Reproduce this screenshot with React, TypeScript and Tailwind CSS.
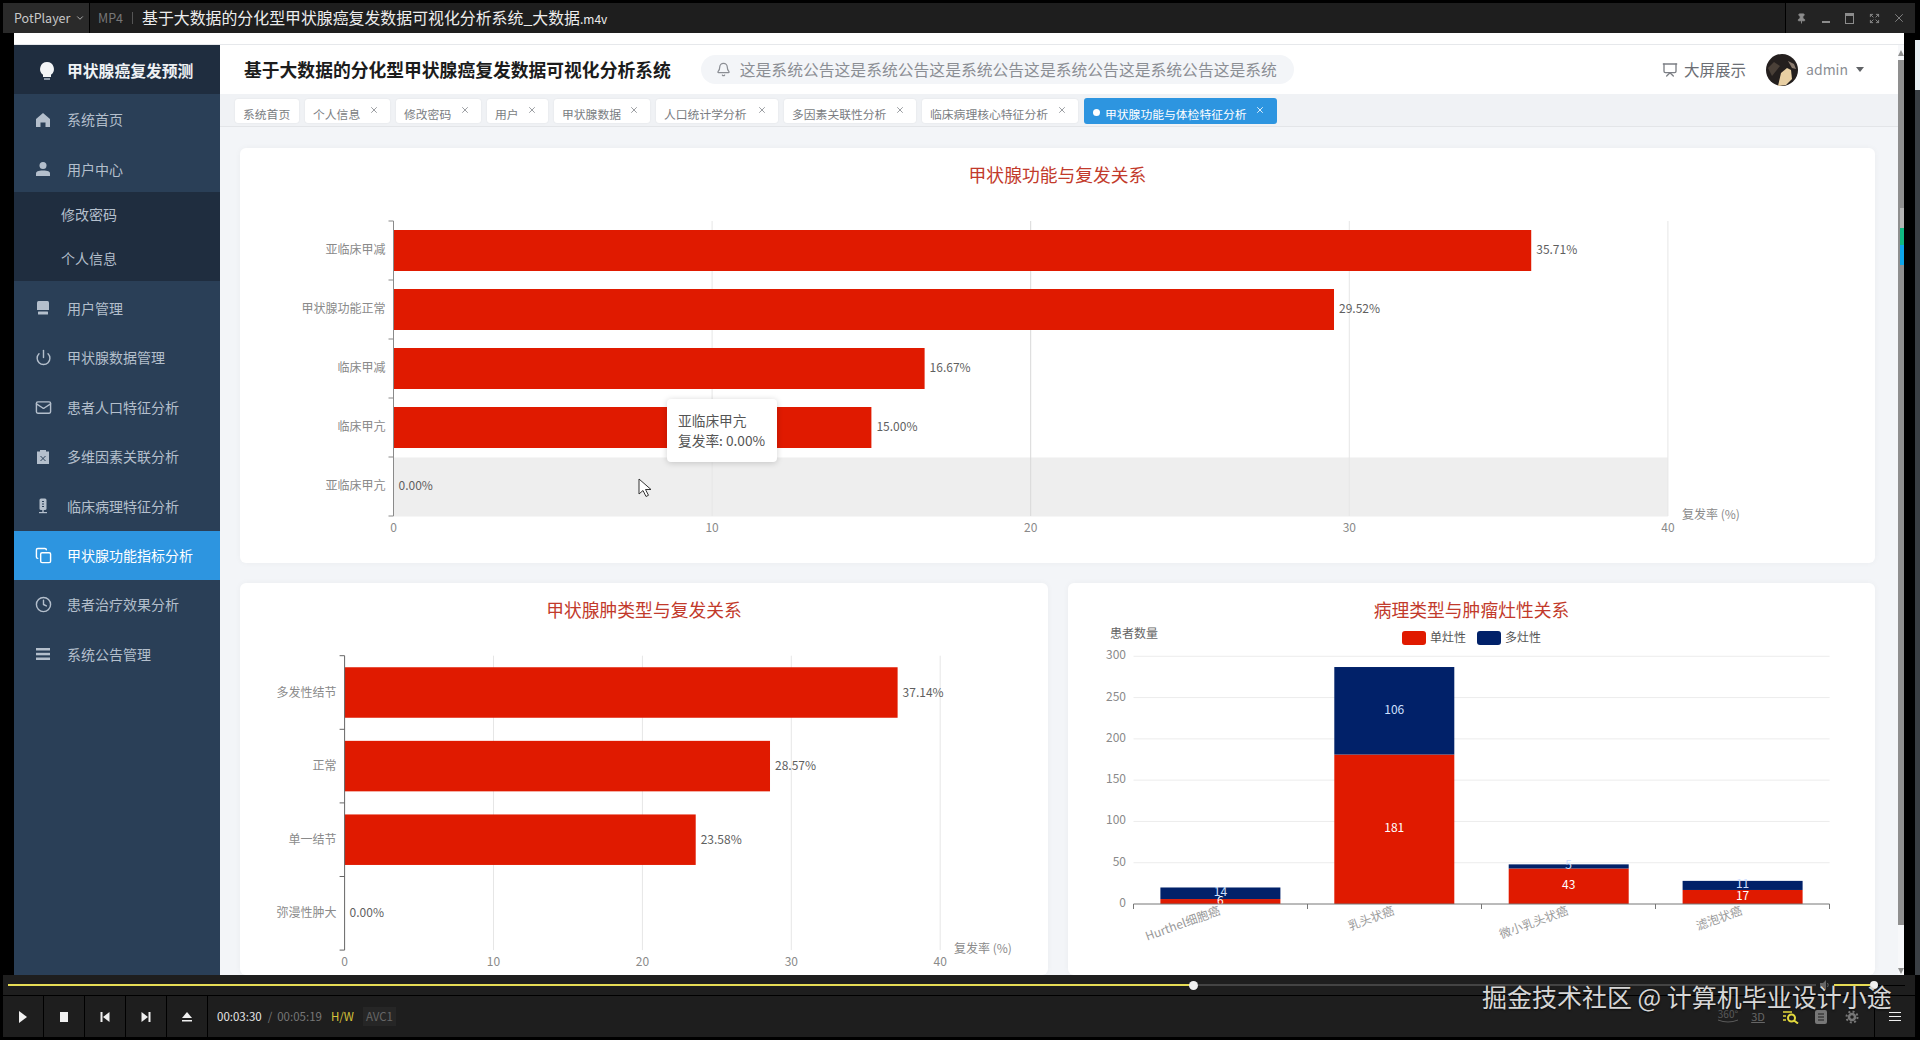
import { Bell, ChevronDown, Clock, Copy, Expand, Mail, Pin, Power, Presentation, X } from 'lucide-react';
import type { ReactNode } from 'react';

const RED = '#e01a00';
const NAVY = '#012169';

const tabs = [
  { label: '系统首页', w: 'w-[64px]', closable: false },
  { label: '个人信息', w: 'w-[85px]', closable: true },
  { label: '修改密码', w: 'w-[85px]', closable: true },
  { label: '用户', w: 'w-[61px]', closable: true },
  { label: '甲状腺数据', w: 'w-[96px]', closable: true },
  { label: '人口统计学分析', w: 'w-[122px]', closable: true },
  { label: '多因素关联性分析', w: 'w-[132px]', closable: true },
  { label: '临床病理核心特征分析', w: 'w-[156px]', closable: true },
];

const HomeIcon = () => (
  <svg width="16" height="16" viewBox="0 0 16 16" fill="currentColor"><path d="M8 1 1 7v8h4.500v-4.500h5V15H15V7z" /></svg>
);
const UserIcon = () => (
  <svg width="16" height="16" viewBox="0 0 16 16" fill="currentColor"><circle cx="8" cy="4.500" r="3.500" /><path d="M1 15v-2.500C1 10.500 3 9.500 8 9.500s7 1 7 3V15z" /></svg>
);
const PrinterIcon = () => (
  <svg width="16" height="16" viewBox="0 0 16 16" fill="currentColor"><path d="M2 2.500Q2 1 3.500 1h9Q14 1 14 2.500V10H2z" /><rect x="3" y="11.500" width="10" height="3" rx="0.500" /></svg>
);
const ClipboardIcon = () => (
  <svg width="16" height="16" viewBox="0 0 16 16"><path fill="currentColor" d="M2 2.500h3V1h6v1.500h3V15H2z" /><path d="m5.500 7 5 5m0-5-5 5" stroke="#2a3f57" strokeWidth="1" /></svg>
);
const MicIcon = () => (
  <svg width="16" height="16" viewBox="0 0 16 16" fill="currentColor"><path d="M4.500 2Q4.500 0.500 6 0.500h4Q11.500 0.500 11.500 2v8.500Q11.500 12 10 12H6Q4.500 12 4.500 10.500z" /><path d="M7 3.500h2M7 6h2M7 8.500h2" stroke="#2a3f57" /><rect x="7.300" y="12" width="1.400" height="2" /><rect x="4" y="14" width="8" height="1.200" /></svg>
);
const BarsIcon = () => (
  <svg width="16" height="16" viewBox="0 0 16 16" fill="currentColor"><rect x="1" y="2" width="14" height="2.500" /><rect x="1" y="6.800" width="14" height="2.500" /><rect x="1" y="11.500" width="14" height="2.500" /></svg>
);

const menuTop: { label: string; icon: ReactNode }[] = [
  { label: '系统首页', icon: <HomeIcon /> },
  { label: '用户中心', icon: <UserIcon /> },
];

const menuRest: { label: string; icon: ReactNode; active?: boolean }[] = [
  { label: '用户管理', icon: <PrinterIcon /> },
  { label: '甲状腺数据管理', icon: <Power size={17} /> },
  { label: '患者人口特征分析', icon: <Mail size={17} /> },
  { label: '多维因素关联分析', icon: <ClipboardIcon /> },
  { label: '临床病理特征分析', icon: <MicIcon /> },
  { label: '甲状腺功能指标分析', icon: <Copy size={17} />, active: true },
  { label: '患者治疗效果分析', icon: <Clock size={17} /> },
  { label: '系统公告管理', icon: <BarsIcon /> },
];

const MenuItem = ({ label, icon, active }: { label: string; icon: ReactNode; active?: boolean }) => (
  <div className={active ? 'h-[49.4px] flex items-center bg-[#2d95e0] text-white' : 'h-[49.4px] flex items-center text-[#b4bfcc]'}>
    <span className="w-[53px] flex justify-center pl-[5px] shrink-0">{icon}</span>
    <span className="text-[14px]">{label}</span>
  </div>
);

const Sidebar = () => (
  <aside className="w-[206px] shrink-0 bg-[#2a3f57] flex flex-col">
    <div className="h-[49px] bg-[#1f2d3f] flex items-center shrink-0 pt-[3px]">
      <svg className="ml-[24px] mr-[11px]" width="18" height="20" viewBox="0 0 18 20" fill="#f2f4f6">
        <path d="M9 1a7 7 0 0 0-4 12.700V16h8v-2.300A7 7 0 0 0 9 1z" />
        <rect x="6" y="17" width="6" height="2" fill="#8b98a8" />
      </svg>
      <span className="text-[15.800px] font-bold text-[#eef1f4] whitespace-nowrap">甲状腺癌复发预测</span>
    </div>
    <div className="h-[1px]" />
    {menuTop.map((m) => <MenuItem key={m.label} {...m} />)}
    <div className="bg-[#1f2d3f] text-[#b4bfcc] text-[14px] -mt-[2px]">
      <div className="h-[44.500px] flex items-center pl-[47px]">修改密码</div>
      <div className="h-[44.500px] flex items-center pl-[47px]">个人信息</div>
    </div>
    <div className="h-[3px]" />
    {menuRest.map((m) => <MenuItem key={m.label} {...m} />)}
  </aside>
);

const Header = () => (
  <header className="h-[49px] shrink-0 bg-white flex items-center pl-[24px] pr-[34px] text-[#606266]">
    <h1 className="text-[17.800px] font-bold text-[#1c1c1c] whitespace-nowrap">基于大数据的分化型甲状腺癌复发数据可视化分析系统</h1>
    <div className="ml-[30px] w-[593px] h-[29px] rounded-full bg-[#f3f5f8] flex items-center pl-[15px] text-[#8b8e94] overflow-hidden shrink-0">
      <Bell size={15} className="mr-[9px] shrink-0" />
      <span className="text-[15.800px] whitespace-nowrap">这是系统公告这是系统公告这是系统公告这是系统公告这是系统公告这是系统</span>
    </div>
    <div className="ml-auto flex items-center">
      <Presentation size={16} className="mr-[6px] text-[#7c7f85]" />
      <span className="text-[15.500px] text-[#6b6e74]">大屏展示</span>
      <svg className="ml-[20px]" width="32" height="32" viewBox="0 0 32 32">
        <circle cx="16" cy="16" r="16" fill="#241f1e" />
        <path d="M12 32 15 19 21 14 25 16 26 25 20 31z" fill="#e8cfa3" />
        <path d="M2 14 8 8 14 12 6 22z" fill="#4a4038" />
        <path d="M22 7 28 10 30 15 26 14z" fill="#8b7c70" />
      </svg>
      <span className="ml-[8px] text-[14px] text-[#8b8e94]">admin</span>
      <span className="ml-[8px] w-0 h-0 border-x-[4px] border-x-transparent border-t-[5px] border-t-[#606266]" />
    </div>
  </header>
);

const TabsBar = () => (
  <div className="h-[33px] shrink-0 bg-[#f0f2f5] border-b border-[#e3e5e8] flex gap-[6px] pl-[15px] pt-[5px]">
    {tabs.map((t) => (
      <div key={t.label} className={`${t.w} h-[24px] rounded-[3px] bg-white flex pl-[8px] text-[#7a7d82] shadow-[0_0_2px_rgba(0,0,0,0.08)]`}>
        <span className="text-[11.800px] leading-[16px] pt-[7px] whitespace-nowrap">{t.label}</span>
        {t.closable && <X size={10} className="ml-auto mr-[11px] mt-[6px] text-[#888b90]" />}
      </div>
    ))}
    <div className="w-[193px] h-[26px] -mt-[1px] rounded-[3px] bg-[#2d95e0] flex pl-[9px] text-white">
      <span className="w-[7px] h-[7px] rounded-full bg-white mt-[11px] mr-[5px]" />
      <span className="text-[11.800px] leading-[16px] pt-[8px] whitespace-nowrap">甲状腺功能与体检特征分析</span>
      <X size={10} className="ml-auto mr-[12px] mt-[7px]" />
    </div>
  </div>
);

const Card = ({ title, className, children }: { title: string; className: string; children: ReactNode }) => (
  <section className={`relative bg-white rounded-[6px] shadow-[0_0_6px_rgba(0,0,0,0.04)] overflow-hidden ${className}`}>
    <h3 className="pt-[14px] pb-[1px] text-center text-[17.800px] leading-[24px] text-[#c23a2b]">{title}</h3>
    {children}
  </section>
);

type Row = { name: string; value: number };

type HBarProps = {
  box: [number, number, number, number];
  rows: Row[];
  x0: number;
  perTen: number;
  yTop: number;
  rowH: number;
  barH: number;
  tickY: number;
  unitX: number;
  unitY: number;
  axis: string;
  labelDy: number;
  band?: number;
};

// coordinates are those of the screenshot, the viewBox crops them to the card
const HBarChart = ({ box, rows, x0, perTen, yTop, rowH, barH, tickY, unitX, unitY, axis, labelDy, band }: HBarProps) => {
  const yBottom = yTop + rowH * rows.length;
  return (
    <svg className="block" width={box[2]} height={box[3]} viewBox={box.join(' ')} fontSize="12">
      {band !== undefined && <rect x={x0} y={yTop + rowH * band + 0.500} width={perTen * 4} height={rowH} fill="#eeeeee" />}
      {[10, 20, 30, 40].map((t) => (
        <line key={t} x1={x0 + (t * perTen) / 10} x2={x0 + (t * perTen) / 10} y1={yTop} y2={yBottom} stroke={band !== undefined && t === 20 ? '#d8d8d8' : '#e6e6e6'} />
      ))}
      {rows.map((r, i) => {
        const cy = yTop + rowH * (i + 0.500);
        const w = (r.value * perTen) / 10;
        return (
          <g key={r.name}>
            <rect x={x0} y={cy - barH / 2} width={w} height={barH} fill={RED} />
            <text x={x0 - 8} y={cy + labelDy} textAnchor="end" fill="#8a8a8a">{r.name}</text>
            <text x={x0 + w + 5} y={cy + labelDy} fill="#5f5f5f">{r.value.toFixed(2)}%</text>
          </g>
        );
      })}
      <line x1={x0} x2={x0} y1={yTop} y2={yBottom} stroke={axis} />
      {rows.map((_, i) => (
        <line key={i} x1={x0 - 5} x2={x0} y1={yTop + rowH * i} y2={yTop + rowH * i} stroke={axis} />
      ))}
      <line x1={x0 - 5} x2={x0} y1={yBottom} y2={yBottom} stroke={axis} />
      {[0, 10, 20, 30, 40].map((t) => (
        <text key={t} x={x0 + (t * perTen) / 10} y={tickY} textAnchor="middle" fill="#8a8a8a">{t}</text>
      ))}
      <text x={unitX} y={unitY} fill="#8a8a8a">复发率 (%)</text>
    </svg>
  );
};

const stack = [
  { name: 'Hurthel细胞癌', x: 1160.400, a: 6, b: 14, labelX: 1221 },
  { name: '乳头状癌', x: 1334.300, a: 181, b: 106, labelX: 1395 },
  { name: '微小乳头状癌', x: 1508.700, a: 43, b: 5, labelX: 1569 },
  { name: '滤泡状癌', x: 1682.600, a: 17, b: 11, labelX: 1743 },
];

const StackChart = () => {
  const y0 = 905;
  const k = 0.8257;
  return (
    <svg className="block" width="807" height="352" viewBox="1068 623 807 352" fontSize="12">
      <text x="1110" y="639" fill="#666666">患者数量</text>
      <rect x="1402" y="632" width="24" height="14" rx="3" fill={RED} />
      <text x="1430" y="643" fill="#555555">单灶性</text>
      <rect x="1477" y="632" width="24" height="14" rx="3" fill={NAVY} />
      <text x="1505" y="643" fill="#555555">多灶性</text>
      {[0, 50, 100, 150, 200, 250, 300].map((t) => (
        <g key={t}>
          {t > 0 && <line x1="1133.500" x2="1829.600" y1={y0 - t * k} y2={y0 - t * k} stroke="#ececec" />}
          <text x="1126" y={y0 - t * k + 3} textAnchor="end" fill="#8a8a8a">{t}</text>
        </g>
      ))}
      {stack.map((s) => {
        const ha = s.a * k;
        const hb = s.b * k;
        return (
          <g key={s.name}>
            <rect x={s.x} y={y0 - ha} width="120" height={ha} fill={RED} />
            <rect x={s.x} y={y0 - ha - hb} width="120" height={hb} fill={NAVY} />
            <text x={s.x + 60} y={y0 - ha - hb / 2 + 3} textAnchor="middle" fill="#cfe0ff">{s.b}</text>
            <text x={s.x + 60} y={y0 - ha / 2 + 3} textAnchor="middle" fill="#ffffff">{s.a}</text>
            <text x={s.labelX} y="915" textAnchor="end" fill="#9a9a9a" transform={`rotate(-20 ${s.labelX} 915)`}>{s.name}</text>
          </g>
        );
      })}
      <line x1="1133.500" x2="1829.600" y1={y0} y2={y0} stroke="#777777" />
      {[0, 1, 2, 3, 4].map((i) => (
        <line key={i} x1={1133.500 + i * 174} x2={1133.500 + i * 174} y1={y0} y2={y0 + 5} stroke="#777777" />
      ))}
    </svg>
  );
};

const Content = () => (
  <div className="flex-1 min-h-0 bg-[#f3f5f8] pl-[20px] pr-[23px] pt-[21px] flex flex-col gap-[20px] overflow-hidden">
    <Card title="甲状腺功能与复发关系" className="h-[415px] shrink-0">
      <HBarChart
        box={[240, 188, 1635, 375]}
        rows={[
          { name: '亚临床甲减', value: 35.71 },
          { name: '甲状腺功能正常', value: 29.52 },
          { name: '临床甲减', value: 16.67 },
          { name: '临床甲亢', value: 15.0 },
          { name: '亚临床甲亢', value: 0 },
        ]}
        x0={393.500}
        perTen={318.600}
        yTop={222}
        rowH={59}
        barH={41}
        tickY={533}
        unitX={1682}
        unitY={520}
        axis="#8a8a8a"
        labelDy={3}
        band={4}
      />
      <div className="absolute left-[427px] top-[251px] w-[110px] h-[63px] rounded-[4px] bg-white shadow-[0_1px_6px_rgba(0,0,0,0.18)] pl-[11px] pt-[11px] text-[13.700px] leading-[20px] text-[#555555]">
        <div>亚临床甲亢</div>
        <div className="whitespace-nowrap">复发率: 0.00%</div>
      </div>
      <svg className="absolute left-[398px] top-[330px]" width="14" height="20" viewBox="0 0 14 20">
        <path d="M1 1v15l4-3.500 3 6 2.500-1.200-3-5.800H13z" fill="#ffffff" stroke="#333333" />
      </svg>
    </Card>
    <div className="flex gap-[20px] flex-1 min-h-0">
      <Card title="甲状腺肿类型与复发关系" className="w-[808px]">
        <HBarChart
          box={[240, 623, 808, 352]}
          rows={[
            { name: '多发性结节', value: 37.14 },
            { name: '正常', value: 28.57 },
            { name: '单一结节', value: 23.58 },
            { name: '弥漫性肿大', value: 0 },
          ]}
          x0={344.600}
          perTen={148.900}
          yTop={656.700}
          rowH={73.600}
          barH={50.500}
          tickY={967}
          unitX={954}
          unitY={954}
          axis="#666666"
          labelDy={4}
        />
      </Card>
      <Card title="病理类型与肿瘤灶性关系" className="w-[807px]">
        <StackChart />
      </Card>
    </div>
  </div>
);

const ScrollBar = () => (
  <div className="w-[6px] shrink-0 bg-[#f7f8fa] flex flex-col pt-[5px] items-end">
    <div className="w-0 h-0 border-x-[3px] border-x-transparent border-b-[6px] border-b-[#8f8f8f]" />
    <div className="mt-[4px] w-full h-[865px] bg-[#8f8f8f] flex flex-col items-end pt-[148px] shrink-0">
      <div className="w-[4px] h-[20px] bg-[#b5b5b5]" />
      <div className="w-[4px] h-[17px] bg-[#10b981]" />
      <div className="w-[4px] h-[20px] bg-[#0ea5e9]" />
    </div>
    <div className="flex-1" />
    <div className="w-0 h-0 border-x-[3px] border-x-transparent border-t-[6px] border-t-[#8f8f8f] mb-[1px]" />
  </div>
);

const WindowButton = ({ children }: { children: ReactNode }) => (
  <span className="w-[24.400px] flex justify-center items-center">{children}</span>
);

const TitleBar = () => (
  <div className="h-[30px] ml-[3px] mr-[5px] bg-[#1e1e1e] flex items-center text-[#c8c8c8] shrink-0">
    <div className="w-[87px] h-full bg-[#2a2a2a] flex items-center pl-[11px] text-[12.500px] border-r border-black">
      PotPlayer
      <ChevronDown size={10} className="ml-[5px]" />
    </div>
    <span className="ml-[8px] text-[12.500px] text-[#777777]">MP4</span>
    <span className="ml-[9px] w-px h-[12px] bg-[#555555]" />
    <span className="ml-[9px] text-[15.900px] text-[#ededed] whitespace-nowrap">
      基于大数据的分化型甲状腺癌复发数据可视化分析系统_大数据<span className="text-[12px]">.m4v</span>
    </span>
    <div className="ml-auto h-full w-[130px] bg-[#232323] border-l border-black flex items-center text-[#8c8c8c] pl-[3px]">
      <WindowButton><Pin size={11} fill="currentColor" /></WindowButton>
      <WindowButton><span className="w-[8px] h-[2px] mt-[8px] bg-current" /></WindowButton>
      <WindowButton><span className="w-[9px] h-[11px] border border-current border-t-[3px]" /></WindowButton>
      <WindowButton><Expand size={11} /></WindowButton>
      <WindowButton><X size={14} strokeWidth={1.500} /></WindowButton>
    </div>
  </div>
);

const PlayerButton = ({ children }: { children: ReactNode }) => (
  <div className="w-[41px] h-full border-r border-black flex items-center justify-center text-[#f0f0f0]">{children}</div>
);

const PlayerControls = () => (
  <div className="h-[62px] ml-[3px] mr-[5px] flex flex-col shrink-0 text-[#8a8a8a]">
    <div className="h-[21px] bg-[#1e1e1e] border-b border-black flex items-center pl-[5px] pr-[10px]">
      <div className="w-[1182px] h-[2px] bg-[#e6dc55]" />
      <div className="w-[9px] h-[9px] rounded-full bg-[#f0f0f0] -ml-[1px]" />
      <div className="w-[618px] h-[2px] bg-[#444444]" />
      <svg className="ml-[3px]" width="12" height="12" viewBox="0 0 12 12" fill="#666666"><path d="M1 4h3l3-3v10L4 8H1z" /><path d="M8.500 4q1.500 2 0 4" stroke="#666666" fill="none" /></svg>
      <div className="ml-[3px] w-[36px] h-[2px] bg-[#e6dc55]" />
      <div className="w-[8px] h-[8px] rounded-full bg-[#f0f0f0]" />
      <div className="flex-1 h-px bg-black" />
    </div>
    <div className="h-[41px] bg-[#1e1e1e] flex items-center">
      <PlayerButton><svg width="10" height="12" viewBox="0 0 10 12" fill="currentColor"><path d="M1 0l8 6-8 6z" /></svg></PlayerButton>
      <PlayerButton><span className="w-[8px] h-[10px] bg-current" /></PlayerButton>
      <PlayerButton><svg width="10" height="10" viewBox="0 0 10 10" fill="currentColor"><rect x="0.500" y="0" width="2" height="10" /><path d="M9.500 0v10L3 5z" /></svg></PlayerButton>
      <PlayerButton><svg width="10" height="10" viewBox="0 0 10 10" fill="currentColor"><rect x="7.500" y="0" width="2" height="10" /><path d="M0.500 0v10L7 5z" /></svg></PlayerButton>
      <PlayerButton><svg width="10" height="10" viewBox="0 0 10 10" fill="currentColor"><path d="M5 0l5 6H0z" /><rect x="0" y="8" width="10" height="1.500" /></svg></PlayerButton>
      <span className="ml-[9px] text-[11.500px] text-[#e8e8e8]">00:03:30</span>
      <span className="ml-[6px] text-[11.500px] text-[#777777]">/</span>
      <span className="ml-[5px] text-[11.500px] text-[#777777]">00:05:19</span>
      <span className="ml-[9px] text-[11.500px] text-[#d8c43a]">H/W</span>
      <span className="ml-[9px] px-[3px] py-[1px] bg-[#262626] text-[11.500px] text-[#666666]">AVC1</span>
      <div className="ml-auto flex items-center h-full pr-[14px]">
        <div className="w-[31px] flex flex-col items-center">
          <span className="text-[10px] leading-[10px] text-[#5a5a5a]">360°</span>
          <svg width="22" height="5" viewBox="0 0 22 5" fill="none" stroke="#5a5a5a"><path d="M1 1q10 4 20 0" /></svg>
        </div>
        <span className="ml-[6.500px] w-[16px] text-center text-[11px] leading-none underline text-[#666666]">3D</span>
        <svg className="ml-[15.500px]" width="17" height="14" viewBox="0 0 17 14" fill="none" stroke="#e3d93d" strokeWidth="1.300">
          <path d="M1 2h9M1 6h3M1 10h3" /><circle cx="9.500" cy="8" r="3.500" strokeWidth="2" /><path d="m12 10.500 4 3" strokeWidth="2" />
        </svg>
        <svg className="ml-[16.500px]" width="12" height="14" viewBox="0 0 12 14"><rect width="12" height="14" rx="2" fill="#777777" /><path d="M3 4h6M3 7h6M3 10h6" stroke="#1e1e1e" /></svg>
        <svg className="ml-[18px]" width="14" height="14" viewBox="0 0 14 14" fill="none" stroke="#777777"><circle cx="7" cy="7" r="3" strokeWidth="2.500" /><circle cx="7" cy="7" r="5.500" strokeWidth="2" strokeDasharray="2 2.300" /></svg>
        <span className="ml-[15px] w-px h-full bg-black" />
        <div className="ml-[14px] w-[12px] flex flex-col gap-[3px]">
          <span className="h-px bg-[#f0f0f0]" />
          <span className="h-px bg-[#f0f0f0]" />
          <span className="h-px bg-[#f0f0f0]" />
        </div>
      </div>
    </div>
  </div>
);

export default function App() {
  return (
    <div className="relative w-screen h-screen bg-black overflow-hidden flex flex-col pt-[3px] font-['Noto_Sans_CJK_SC','Noto_Sans',sans-serif]">
      <TitleBar />
      <div className="h-[942px] shrink-0 pl-[14px] pr-[16px] flex">
        <div className="flex-1 min-w-0 flex flex-col bg-white">
          <div className="h-[12px] shrink-0 border-b border-[#e6e8eb]" />
          <div className="flex-1 min-h-0 flex">
            <Sidebar />
            <main className="flex-1 min-w-0 flex flex-col">
              <Header />
              <TabsBar />
              <Content />
            </main>
            <ScrollBar />
          </div>
        </div>
      </div>
      <PlayerControls />
      <div className="absolute right-0 top-[40px] w-[5px] h-[935px] flex flex-col">
        <div className="h-[50px] bg-[#e6eef2]" />
        <div className="flex-1 bg-[#3a3f44]" />
      </div>
      <div className="absolute left-[1482px] top-[978px] text-[25px] leading-[36px] text-[#d6d6d6] whitespace-nowrap [text-shadow:0_1px_2px_rgba(0,0,0,0.7)]">
        掘金技术社区 @ 计算机毕业设计小途
      </div>
    </div>
  );
}
